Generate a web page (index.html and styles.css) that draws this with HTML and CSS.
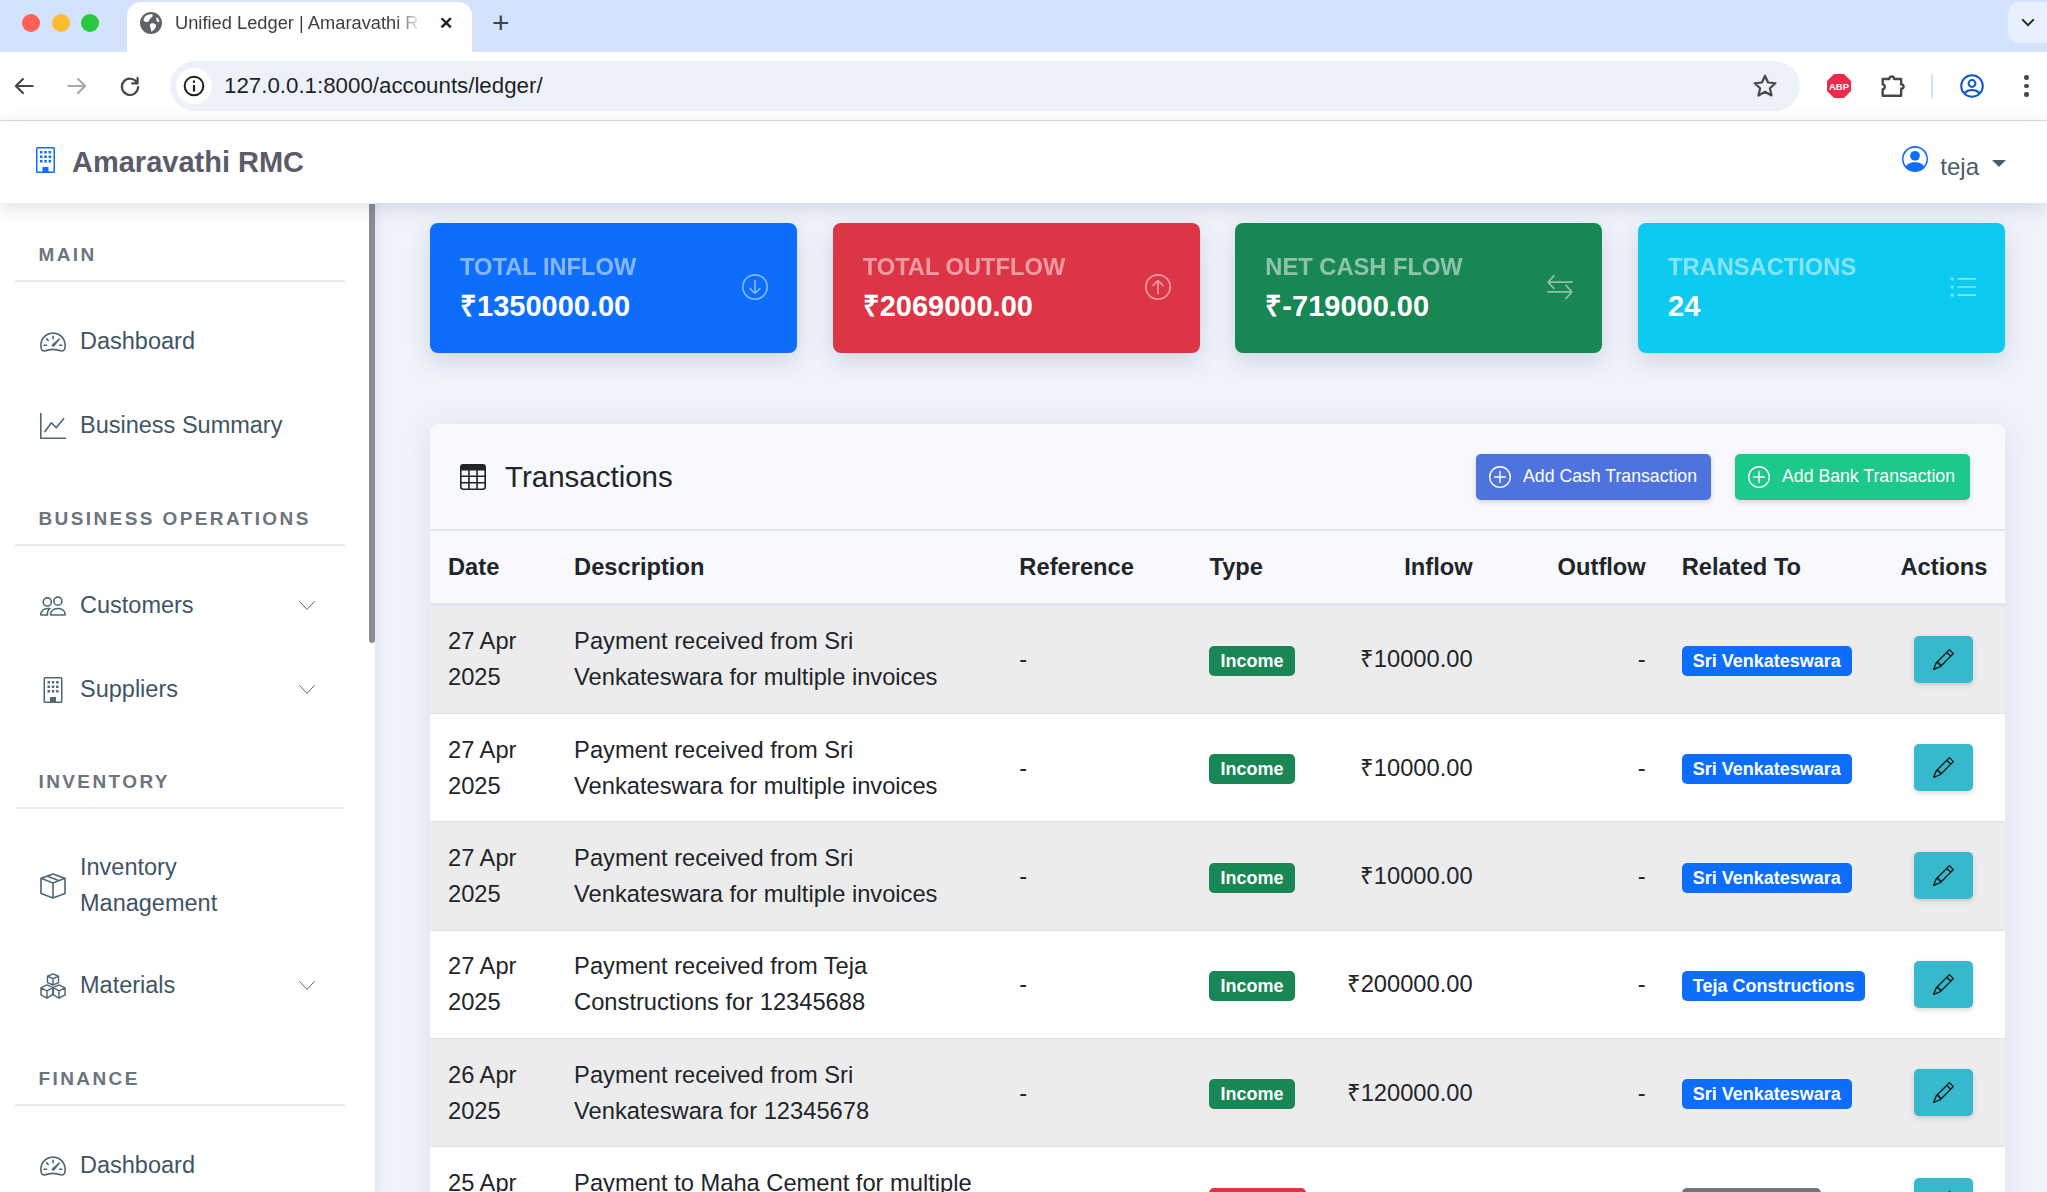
FILE: index.html
```html
<!DOCTYPE html>
<html lang="en">
<head>
<meta charset="utf-8">
<title>Unified Ledger | Amaravathi RMC</title>
<link rel="stylesheet" href="styles.css">
</head>
<body>
<svg class="sprite" aria-hidden="true">
  <symbol id="i-speed" viewBox="0 0 16 16"><path d="M8 4a.5.5 0 0 1 .5.5V6a.5.5 0 0 1-1 0V4.5A.5.5 0 0 1 8 4zM3.732 5.732a.5.5 0 0 1 .707 0l.915.914a.5.5 0 1 1-.708.708l-.914-.915a.5.5 0 0 1 0-.707zM2 10a.5.5 0 0 1 .5-.5h1.586a.5.5 0 0 1 0 1H2.5A.5.5 0 0 1 2 10zm9.5 0a.5.5 0 0 1 .5-.5h1.5a.5.5 0 0 1 0 1H12a.5.5 0 0 1-.5-.5zm.754-4.246a.389.389 0 0 0-.527-.02L7.547 9.31a.91.91 0 1 0 1.302 1.258l3.434-4.297a.389.389 0 0 0-.029-.518z"/><path fill-rule="evenodd" d="M0 10a8 8 0 1 1 15.547 2.661c-.442 1.253-1.845 1.602-2.932 1.25C11.309 13.488 9.475 13 8 13c-1.474 0-3.31.488-4.615.911-1.087.352-2.49.003-2.932-1.25A7.988 7.988 0 0 1 0 10zm8-7a7 7 0 0 0-6.603 9.329c.203.575.923.876 1.68.63C4.397 12.533 6.358 12 8 12s3.604.532 4.923.96c.757.245 1.477-.056 1.68-.631A7 7 0 0 0 8 3z"/></symbol>
  <symbol id="i-graph" viewBox="0 0 16 16"><path fill-rule="evenodd" d="M0 0h1v15h15v1H0V0Zm14.817 3.113a.5.5 0 0 1 .07.704l-4.5 5.5a.5.5 0 0 1-.74.037L7.06 6.767l-3.656 5.027a.5.5 0 0 1-.808-.588l4-5.5a.5.5 0 0 1 .758-.06l2.609 2.61 4.15-5.073a.5.5 0 0 1 .704-.07Z"/></symbol>
  <symbol id="i-people" viewBox="0 0 16 16"><path d="M15 14s1 0 1-1-1-4-5-4-5 3-5 4 1 1 1 1h8Zm-7.978-1A.261.261 0 0 1 7 12.996c.001-.264.167-1.03.76-1.72C8.312 10.629 9.282 10 11 10c1.717 0 2.687.63 3.24 1.276.593.69.758 1.457.76 1.72l-.008.002a.274.274 0 0 1-.014.002H7.022ZM11 7a2 2 0 1 0 0-4 2 2 0 0 0 0 4Zm3-2a3 3 0 1 1-6 0 3 3 0 0 1 6 0ZM6.936 9.28a5.88 5.88 0 0 0-1.23-.247A7.35 7.35 0 0 0 5 9c-4 0-5 3-5 4 0 .667.333 1 1 1h4.216A2.238 2.238 0 0 1 5 13c0-1.01.377-2.042 1.09-2.904.243-.294.526-.569.846-.816ZM4.92 10A5.493 5.493 0 0 0 4 13H1c0-.26.164-1.03.76-1.724.545-.636 1.492-1.256 3.16-1.275ZM1.5 5.5a3 3 0 1 1 6 0 3 3 0 0 1-6 0Zm3-2a2 2 0 1 0 0 4 2 2 0 0 0 0-4Z"/></symbol>
  <symbol id="i-building" viewBox="0 0 19 26"><path fill-rule="evenodd" d="M1.500 0h16A1.500 1.500 0 0 1 19 1.500v23a1.500 1.500 0 0 1-1.500 1.500h-16A1.500 1.500 0 0 1 0 24.500v-23A1.500 1.500 0 0 1 1.500 0Zm0 1.500v23h16v-23h-16Z"/><path d="M6.500 20h6v5h-6zM4 4h2.500v2.500H4zM8.300 4h2.500v2.500H8.300zM12.600 4h2.500v2.500h-2.500zM4 8.500h2.500V11H4zM8.300 8.500h2.500V11H8.300zM12.600 8.500h2.500V11h-2.500zM4 13h2.500v2.500H4zM8.300 13h2.500v2.500H8.300zM12.600 13h2.500v2.500h-2.500z"/></symbol>
  <symbol id="i-box" viewBox="0 0 16 16"><path fill="none" stroke="currentColor" stroke-linejoin="round" d="M8 .6 15.400 3.300v9.300L8 15.400.6 12.600V3.300L8 .6ZM.6 3.300 8 6.100l7.400-2.800M8 6.100v9.300M4.300 1.900l7.400 2.800"/></symbol>
  <symbol id="i-boxes" viewBox="0 0 16 16"><path fill="none" stroke="currentColor" stroke-width=".9" stroke-linejoin="round" d="M8 .5l3.400 1.500v3.900L8 7.400 4.600 5.900V2L8 .5ZM4.600 2 8 3.500 11.400 2M8 3.500v3.900M4.300 7.300l3.500 1.500v4.400L4.300 15.500.6 13.500V9.200l3.700-1.900ZM.6 9.200l3.700 1.800 3.500-2M4.300 11v4.500M11.700 7.300l3.700 1.900v4.300l-3.700 2-3.500-2V8.800l3.500-1.500ZM8.200 9l3.500 2 3.700-1.800M11.700 11v4.500"/></symbol>
  <symbol id="i-chevron" viewBox="0 0 16 16"><path fill="none" stroke="currentColor" stroke-linecap="round" d="M.7 3.700 8 11.400l7.300-7.700"/></symbol>
  <symbol id="i-person" viewBox="0 0 16 16"><path d="M11 6a3 3 0 1 1-6 0 3 3 0 0 1 6 0z"/><path fill-rule="evenodd" d="M0 8a8 8 0 1 1 16 0A8 8 0 0 1 0 8zm8-7a7 7 0 0 0-5.468 11.37C3.242 11.226 4.805 10 8 10s4.757 1.225 5.468 2.37A7 7 0 0 0 8 1z"/></symbol>
  <symbol id="i-pencil" viewBox="0 0 16 16"><path d="M12.146.146a.5.5 0 0 1 .708 0l3 3a.5.5 0 0 1 0 .708l-10 10a.5.5 0 0 1-.168.11l-5 2a.5.5 0 0 1-.65-.65l2-5a.5.5 0 0 1 .11-.168l10-10zM11.207 2.500 13.500 4.793 14.793 3.500 12.500 1.207 11.207 2.500zm1.586 3L10.500 3.207 4 9.707V10h.5a.5.5 0 0 1 .5.5v.5h.5a.5.5 0 0 1 .5.5v.5h.293l6.500-6.500zm-9.761 5.175-.106.106-1.528 3.821 3.821-1.528.106-.106A.5.5 0 0 1 5 12.500V12h-.5a.5.5 0 0 1-.5-.5V11h-.5a.5.5 0 0 1-.468-.325z"/></symbol>
  <symbol id="i-plus" viewBox="0 0 16 16"><circle cx="8" cy="8" r="7.500" fill="none" stroke="currentColor"/><path fill="none" stroke="currentColor" stroke-linecap="round" d="M8 4v8M4 8h8"/></symbol>
  <symbol id="i-table" viewBox="0 0 16 16"><path d="M0 2a2 2 0 0 1 2-2h12a2 2 0 0 1 2 2v12a2 2 0 0 1-2 2H2a2 2 0 0 1-2-2V2zm15 2h-4v3h4V4zm0 4h-4v3h4V8zm0 4h-4v3h3a1 1 0 0 0 1-1v-2zm-5 3v-3H6v3h4zm-5 0v-3H1v2a1 1 0 0 0 1 1h3zm-4-4h4V8H1v3zm0-4h4V4H1v3zm5-3v3h4V4H6zm4 4H6v3h4V8z"/></symbol>
  <symbol id="i-down" viewBox="0 0 16 16"><circle cx="8" cy="8" r="7.500" fill="none" stroke="currentColor"/><path fill="none" stroke="currentColor" stroke-linecap="round" stroke-linejoin="round" d="M8 4v8M5 9l3 3 3-3"/></symbol>
  <symbol id="i-up" viewBox="0 0 16 16"><circle cx="8" cy="8" r="7.500" fill="none" stroke="currentColor"/><path fill="none" stroke="currentColor" stroke-linecap="round" stroke-linejoin="round" d="M8 12V4M5 7l3-3 3 3"/></symbol>
  <symbol id="i-swap" viewBox="0 0 16 16"><path fill="none" stroke="currentColor" stroke-linecap="round" stroke-linejoin="round" d="M15.500 5H.7M4.300 1 .7 5l3.600 4M.5 11h14.800M11.700 7l3.600 4-3.600 4"/></symbol>
  <symbol id="i-list" viewBox="0 0 16 16"><path fill="none" stroke="currentColor" stroke-linecap="round" d="M5 3h10.500M5 8h10.500M5 13h10.500"/><circle cx="1.300" cy="3" r="1"/><circle cx="1.300" cy="8" r="1"/><circle cx="1.300" cy="13" r="1"/></symbol>
</svg>

<header class="tabstrip">
  <div class="lights"><span class="light red"></span><span class="light amber"></span><span class="light green"></span></div>
  <div class="tab">
    <svg class="globe" viewBox="0 0 22 22"><circle cx="11" cy="11" r="11" fill="#5f6368"/><path fill="#fff" d="M5 4.500c2-1.500 5-2.500 7.500-2 .8 1.500-.5 3-2 3.500-.5 1.500-1.500 2-2 3.500-1.500 1-3 .5-5-.5.200-1.800.6-3.300 1.500-4.500ZM11 11.500c2-.5 4 .2 5 1.500.5 1.500-.5 3-1.500 4-1 1.500-2 2.300-3.200 2.500-.5-1.500-.3-2.800-1-4-.8-1.500-.5-3 .7-4ZM16.500 5c1.500 1 2.500 2.800 3 4.500l-2 .5c-1-.5-1.500-2.500-1-5Z"/></svg>
    <span class="tab-title">Unified Ledger | Amaravathi RMC</span>
    <span class="tab-close">✕</span>
  </div>
  <span class="newtab">+</span>
  <span class="tab-menu"><svg class="tab-chev" viewBox="0 0 16 16"><path fill="none" stroke="#1f1f1f" stroke-width="2.200" stroke-linecap="round" d="M2 4.500 8 10.500l6-6"/></svg></span>
</header>

<div class="toolbar">
  <svg class="tool" viewBox="0 0 24 24"><path class="tl-dark" d="M20 12H5M11 5.500 4.500 12l6.500 6.500"/></svg>
  <svg class="tool" viewBox="0 0 24 24"><path class="tl-light" d="M4 12h15M13 5.500l6.500 6.500-6.500 6.500"/></svg>
  <svg class="tool" viewBox="0 0 24 24"><path class="tl-dark" d="M18.500 9A7.500 7.500 0 1 0 19.500 13M19 4.500V9.500h-5"/></svg>
  <div class="omnibox">
    <span class="info"><svg class="info-i" viewBox="0 0 20 20"><circle cx="10" cy="10" r="8.500" fill="none" stroke="#1f1f1f" stroke-width="1.800"/><path fill="#1f1f1f" d="M9 9h2v6H9zM9 5h2v2H9z"/></svg></span>
    <span class="url">127.0.0.1:8000/accounts/ledger/</span>
    <svg class="star" viewBox="0 0 24 24"><path fill="none" stroke="#474747" stroke-width="2" stroke-linejoin="round" d="M12 2.500l2.800 6.300 6.800.7-5.100 4.600 1.500 6.700-6-3.500-6 3.500 1.500-6.700L2.400 9.500l6.800-.7z"/></svg>
  </div>
  <svg class="abp" viewBox="0 0 24 24"><path fill="#ee2a4a" d="M7 0h10l7 7v10l-7 7H7l-7-7V7z"/><text x="12" y="15.500" class="abp-text">ABP</text></svg>
  <svg class="puzzle" viewBox="0 0 24 24"><path fill="none" stroke="#474747" stroke-width="2.200" stroke-linejoin="round" d="M2.500 5.500H8.500C8.500 2.500 13 2.500 13 5.500h6.500v5c3 0 3 4 0 4v6.500H2.500v-6c2.500 0 2.500-4.500 0-4.500z"/></svg>
  <span class="tool-sep"></span>
  <svg class="profile" viewBox="0 0 24 24"><circle cx="12" cy="12" r="10.800" fill="none" stroke="#0b57d0" stroke-width="2"/><circle cx="12" cy="9.500" r="3.400" fill="none" stroke="#0b57d0" stroke-width="2"/><path fill="none" stroke="#0b57d0" stroke-width="2" d="M4.500 19c4-4 11-4 15 0"/></svg>
  <span class="kebab"><i></i><i></i><i></i></span>
</div>

<nav class="navbar">
  <svg class="brand-icon"><use href="#i-building"/></svg>
  <span class="brand">Amaravathi RMC</span>
  <div class="user">
    <svg class="user-icon"><use href="#i-person"/></svg>
    <span class="user-name">teja</span>
    <span class="caret"></span>
  </div>
</nav>

<div class="app">
  <aside class="sidebar">
    <span class="scroll-thumb"></span>
    <h6 class="side-head">MAIN</h6>
    <a class="side-item"><svg class="side-icon"><use href="#i-speed"/></svg><span class="side-text">Dashboard</span></a>
    <a class="side-item"><svg class="side-icon"><use href="#i-graph"/></svg><span class="side-text">Business Summary</span></a>
    <h6 class="side-head">BUSINESS OPERATIONS</h6>
    <a class="side-item"><svg class="side-icon"><use href="#i-people"/></svg><span class="side-text">Customers</span><svg class="side-chev"><use href="#i-chevron"/></svg></a>
    <a class="side-item"><svg class="side-icon"><use href="#i-building"/></svg><span class="side-text">Suppliers</span><svg class="side-chev"><use href="#i-chevron"/></svg></a>
    <h6 class="side-head">INVENTORY</h6>
    <a class="side-item"><svg class="side-icon"><use href="#i-box"/></svg><span class="side-text narrow">Inventory Management</span></a>
    <a class="side-item"><svg class="side-icon"><use href="#i-boxes"/></svg><span class="side-text">Materials</span><svg class="side-chev"><use href="#i-chevron"/></svg></a>
    <h6 class="side-head">FINANCE</h6>
    <a class="side-item"><svg class="side-icon"><use href="#i-speed"/></svg><span class="side-text">Dashboard</span></a>
  </aside>

  <main class="main">
    <section class="stats">
      <div class="stat bg-blue"><div><div class="stat-label">TOTAL INFLOW</div><div class="stat-value">₹1350000.00</div></div><svg class="stat-icon"><use href="#i-down"/></svg></div>
      <div class="stat bg-red"><div><div class="stat-label">TOTAL OUTFLOW</div><div class="stat-value">₹2069000.00</div></div><svg class="stat-icon"><use href="#i-up"/></svg></div>
      <div class="stat bg-green"><div><div class="stat-label">NET CASH FLOW</div><div class="stat-value">₹-719000.00</div></div><svg class="stat-icon"><use href="#i-swap"/></svg></div>
      <div class="stat bg-cyan"><div><div class="stat-label">TRANSACTIONS</div><div class="stat-value">24</div></div><svg class="stat-icon"><use href="#i-list"/></svg></div>
    </section>

    <section class="card">
      <div class="card-head">
        <svg class="table-icon"><use href="#i-table"/></svg>
        <h5 class="card-title">Transactions</h5>
        <button class="btn btn-cash"><svg class="btn-icon"><use href="#i-plus"/></svg>Add Cash Transaction</button>
        <button class="btn btn-bank"><svg class="btn-icon"><use href="#i-plus"/></svg>Add Bank Transaction</button>
      </div>
      <table class="ledger">
        <colgroup><col class="c-date"><col class="c-desc"><col class="c-ref"><col class="c-type"><col class="c-in"><col class="c-out"><col class="c-rel"><col class="c-act"></colgroup>
        <thead><tr><th>Date</th><th>Description</th><th>Reference</th><th>Type</th><th class="num">Inflow</th><th class="num">Outflow</th><th>Related To</th><th class="ctr">Actions</th></tr></thead>
        <tbody>
          <tr><td>27 Apr 2025</td><td>Payment received from Sri Venkateswara for multiple invoices</td><td>-</td><td><span class="badge b-green">Income</span></td><td class="num">₹10000.00</td><td class="num">-</td><td><span class="badge b-blue">Sri Venkateswara</span></td><td class="ctr"><span class="edit"><svg class="edit-icon"><use href="#i-pencil"/></svg></span></td></tr>
          <tr><td>27 Apr 2025</td><td>Payment received from Sri Venkateswara for multiple invoices</td><td>-</td><td><span class="badge b-green">Income</span></td><td class="num">₹10000.00</td><td class="num">-</td><td><span class="badge b-blue">Sri Venkateswara</span></td><td class="ctr"><span class="edit"><svg class="edit-icon"><use href="#i-pencil"/></svg></span></td></tr>
          <tr><td>27 Apr 2025</td><td>Payment received from Sri Venkateswara for multiple invoices</td><td>-</td><td><span class="badge b-green">Income</span></td><td class="num">₹10000.00</td><td class="num">-</td><td><span class="badge b-blue">Sri Venkateswara</span></td><td class="ctr"><span class="edit"><svg class="edit-icon"><use href="#i-pencil"/></svg></span></td></tr>
          <tr><td>27 Apr 2025</td><td>Payment received from Teja Constructions for 12345688</td><td>-</td><td><span class="badge b-green">Income</span></td><td class="num">₹200000.00</td><td class="num">-</td><td><span class="badge b-blue">Teja Constructions</span></td><td class="ctr"><span class="edit"><svg class="edit-icon"><use href="#i-pencil"/></svg></span></td></tr>
          <tr><td>26 Apr 2025</td><td>Payment received from Sri Venkateswara for 12345678</td><td>-</td><td><span class="badge b-green">Income</span></td><td class="num">₹120000.00</td><td class="num">-</td><td><span class="badge b-blue">Sri Venkateswara</span></td><td class="ctr"><span class="edit"><svg class="edit-icon"><use href="#i-pencil"/></svg></span></td></tr>
          <tr><td>25 Apr 2025</td><td>Payment to Maha Cement for multiple invoices</td><td>-</td><td><span class="badge b-red">Expense</span></td><td class="num">-</td><td class="num">₹200000.00</td><td><span class="badge b-gray">Maha Cement</span></td><td class="ctr"><span class="edit"><svg class="edit-icon"><use href="#i-pencil"/></svg></span></td></tr>
        </tbody>
      </table>
    </section>
  </main>
</div>
</body>
</html>
```

FILE: styles.css
```css
* { box-sizing: border-box; }
html, body { margin: 0; height: 100%; overflow: hidden; }
body { font-family: "Liberation Sans", Arial, sans-serif; background: #eef3fc; color: #212529; display: flex; flex-direction: column; }
.sprite { display: none; }
svg { fill: currentColor; flex: none; display: block; }

/* browser chrome */
.tabstrip { height: 52px; flex: none; background: #d3e3fd; display: flex; align-items: flex-end; position: relative; }
.lights { display: flex; gap: 11.500px; padding: 0 0 20px 22px; width: 127px; }
.light { width: 18px; height: 18px; border-radius: 50%; }
.red { background: #ff5f57; }
.amber { background: #febc2e; }
.green { background: #28c840; }
.tab { width: 345px; height: 50px; background: #fff; border-radius: 14px 14px 0 0; display: flex; align-items: center; padding: 0 0 8px 13px; }
.globe { width: 22px; height: 22px; }
.tab-title { width: 246px; margin-left: 13px; font-size: 18.300px; color: #3c4043; white-space: nowrap; overflow: hidden; -webkit-mask-image: linear-gradient(90deg, #000 90%, transparent); mask-image: linear-gradient(90deg, #000 90%, transparent); }
.tab-close { margin-left: 18px; font-size: 17px; color: #1f1f1f; font-weight: 700; }
.newtab { font-size: 30px; line-height: 30px; color: #444; margin: 0 0 14px 20px; }
.tab-menu { position: absolute; right: 0; top: 2px; width: 39px; height: 41px; background: #e9f0fd; border-radius: 12px 0 0 12px; display: flex; align-items: center; justify-content: center; }
.tab-chev { width: 14px; height: 14px; }

.toolbar { height: 69px; flex: none; background: #fff; border-bottom: 1px solid #dadce0; display: flex; align-items: center; padding: 0 0 0 11px; }
.tool { width: 26px; height: 26px; margin-right: 27px; }
.tl-dark, .tl-light { fill: none; stroke-width: 2; stroke-linecap: round; stroke-linejoin: round; }
.tl-dark { stroke: #474747; }
.tl-light { stroke: #a9a9a9; }
.omnibox { width: 1630px; height: 50px; background: #edf2fa; border-radius: 25px; display: flex; align-items: center; padding: 0 22px 0 6px; }
.info { width: 36px; height: 36px; border-radius: 50%; background: #fff; display: flex; align-items: center; justify-content: center; }
.info-i { width: 22px; height: 22px; }
.url { margin-left: 12px; font-size: 22.300px; color: #1f1f1f; flex: 1; }
.star { width: 26px; height: 26px; }
.abp { width: 24px; height: 24px; margin-left: 27px; }
.abp-text { fill: #fff; font-size: 9.500px; font-weight: 700; text-anchor: middle; font-family: "Liberation Sans", sans-serif; }
.puzzle { width: 26px; height: 26px; margin-left: 29px; }
.tool-sep { width: 2px; height: 24px; background: #d3e3fd; margin-left: 25px; }
.profile { width: 24px; height: 24px; margin-left: 27px; }
.kebab { display: flex; flex-direction: column; gap: 4px; margin-left: 40px; }
.kebab i { width: 4.500px; height: 4.500px; border-radius: 50%; background: #474747; }

.navbar { height: 82px; flex: none; background: #fff; display: flex; align-items: center; padding: 0 41px 0 36px; position: relative; z-index: 3; box-shadow: 0 4px 18px rgba(58,59,69,.16); }
.brand-icon { width: 19px; height: 26px; color: #0d6efd; margin-top: -4px; }
.brand { font-size: 29px; font-weight: 700; color: #5a5c69; margin-left: 17px; }
.user { margin-left: auto; display: flex; align-items: center; color: #485e6d; }
.user-icon { width: 26px; height: 26px; color: #0d6efd; margin-top: -6px; }
.user-name { font-size: 24px; margin-left: 12px; padding-top: 10px; }
.caret { width: 0; height: 0; border: 7px solid transparent; border-top-color: #485e6d; border-bottom: 0; margin-left: 13px; margin-top: 2px; }

/* layout */
.app { flex: 1; display: flex; min-height: 0; }
.sidebar { width: 375px; flex: none; background: #fff; padding: 39px 30px 0 15px; position: relative; z-index: 2; box-shadow: 2px 0 10px rgba(58,59,69,.1); }
.scroll-thumb { position: absolute; right: 0; top: 1px; width: 6px; height: 439px; background: #8a8a9a; border-radius: 0 0 3px 3px; }
.side-head { margin: 37.500px 0 18px; padding: 0 0 14px 23.500px; height: 40px; line-height: 26px; font-size: 19px; font-weight: 700; letter-spacing: 2.400px; color: #6c757d; border-bottom: 2px solid #e9ecef; }
.side-head:first-of-type { margin-top: 0; }
.side-item { display: flex; align-items: center; min-height: 84px; padding: 23px 30px 23px 25px; font-size: 23.500px; line-height: 35.500px; color: #3f5564; }
.side-icon { width: 26px; height: 26px; color: #4f6876; }
.side-text { margin-left: 14px; }
.side-text.narrow { width: 180px; }
.side-chev { width: 16px; height: 16px; margin-left: auto; color: #4f6876; }

.main { flex: 1; min-width: 0; padding: 20px 42px 0 55px; }
.stats { display: grid; grid-template-columns: repeat(4, 1fr); gap: 35.700px; }
.stat { height: 130px; border-radius: 8px; padding: 0 30px; color: #fff; display: flex; align-items: center; justify-content: space-between; box-shadow: 0 8px 24px rgba(58,59,69,.16); }
.bg-blue { background: #0d6efd; }
.bg-red { background: #dc3545; }
.bg-green { background: #198754; }
.bg-cyan { background: #0dcaf0; }
.stat-label { font-size: 23.700px; font-weight: 700; line-height: 36px; opacity: .5; }
.stat-value { font-size: 29px; font-weight: 700; line-height: 42px; }
.stat-icon { width: 26px; height: 26px; opacity: .5; margin: -2px -1px 0 0; }

.card { margin-top: 71px; border-radius: 8px 8px 0 0; background: #fff; box-shadow: 0 3px 28px rgba(58,59,69,.1); overflow: hidden; }
.card-head { height: 107px; background: #f8f9fc; border-bottom: 2px solid #e3e6f0; display: flex; align-items: center; padding: 0 35px 0 30px; }
.table-icon { width: 26px; height: 26px; color: #212529; }
.card-title { margin: 0 auto 0 19px; font-size: 29.500px; font-weight: 400; color: #212529; }
.btn { height: 46px; width: 235px; margin-left: 24px; border: 0; border-radius: 5px; color: #fff; font: 17.700px "Liberation Sans", Arial, sans-serif; display: flex; align-items: center; padding: 0 0 0 13px; box-shadow: 0 2px 5px rgba(58,59,69,.2); }
.btn-cash { background: #4e73df; }
.btn-bank { background: #1cc88a; }
.btn-icon { width: 22px; height: 22px; margin-right: 12px; }

.ledger { width: 100%; table-layout: fixed; border-collapse: collapse; font-size: 23.700px; line-height: 36px; }
.c-date { width: 126px; }
.c-desc { width: 445px; }
.c-ref { width: 190px; }
.c-type { width: 136px; }
.c-in { width: 163px; }
.c-out { width: 173px; }
.c-rel { width: 219px; }
.c-act { width: 122px; }
.ledger th { height: 73px; padding: 0 18px; text-align: left; font-weight: 700; background: #f8f9fc; border-bottom: 3px solid #e3e6f0; }
.ledger td { padding: 17.700px 18px; border-bottom: 1px solid #dee2e6; vertical-align: middle; }
.ledger tbody tr:nth-child(odd) td { background: #ececec; }
.ledger .num { text-align: right; }
.ledger .ctr { text-align: center; padding-left: 0; padding-right: 0; }
.badge { display: inline-block; height: 30px; line-height: 30px; padding: 0 11px; border-radius: 5px; font-size: 18px; font-weight: 700; color: #fff; vertical-align: middle; white-space: nowrap; }
.b-green { background: #198754; }
.b-blue { background: #0d6efd; }
.b-red { background: #dc3545; }
.b-gray { background: #6c757d; }
.edit { display: inline-flex; width: 59px; height: 47px; align-items: center; justify-content: center; background: #36b9cc; border-radius: 5px; vertical-align: middle; box-shadow: 0 2px 5px rgba(58,59,69,.2); }
.edit-icon { width: 21px; height: 21px; color: #111; }
```
